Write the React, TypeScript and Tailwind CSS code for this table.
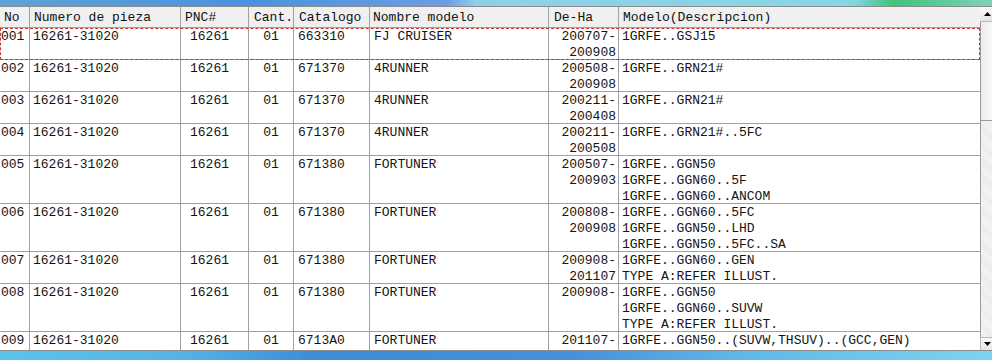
type Part = {
  no: string;
  catalogo: string;
  modelo: string;
  deHa: string[];
  desc: string[];
  lines: number;
};

const ROWS: Part[] = [
  { no: "001", catalogo: "663310", modelo: "FJ CRUISER", deHa: ["200707-", "200908"], desc: ["1GRFE..GSJ15"], lines: 2 },
  { no: "002", catalogo: "671370", modelo: "4RUNNER", deHa: ["200508-", "200908"], desc: ["1GRFE..GRN21#"], lines: 2 },
  { no: "003", catalogo: "671370", modelo: "4RUNNER", deHa: ["200211-", "200408"], desc: ["1GRFE..GRN21#"], lines: 2 },
  { no: "004", catalogo: "671370", modelo: "4RUNNER", deHa: ["200211-", "200508"], desc: ["1GRFE..GRN21#..5FC"], lines: 2 },
  {
    no: "005",
    catalogo: "671380",
    modelo: "FORTUNER",
    deHa: ["200507-", "200903"],
    desc: ["1GRFE..GGN50", "1GRFE..GGN60..5F", "1GRFE..GGN60..ANCOM"],
    lines: 3,
  },
  {
    no: "006",
    catalogo: "671380",
    modelo: "FORTUNER",
    deHa: ["200808-", "200908"],
    desc: ["1GRFE..GGN60..5FC", "1GRFE..GGN50..LHD", "1GRFE..GGN50..5FC..SA"],
    lines: 3,
  },
  {
    no: "007",
    catalogo: "671380",
    modelo: "FORTUNER",
    deHa: ["200908-", "201107"],
    desc: ["1GRFE..GGN60..GEN", "TYPE A:REFER ILLUST."],
    lines: 2,
  },
  {
    no: "008",
    catalogo: "671380",
    modelo: "FORTUNER",
    deHa: ["200908-"],
    desc: ["1GRFE..GGN50", "1GRFE..GGN60..SUVW", "TYPE A:REFER ILLUST."],
    lines: 3,
  },
  {
    no: "009",
    catalogo: "6713A0",
    modelo: "FORTUNER",
    deHa: ["201107-"],
    desc: ["1GRFE..GGN50..(SUVW,THSUV)..(GCC,GEN)"],
    lines: 2,
  },
];

const GRID = "grid grid-cols-[30px_151px_68px_45px_76px_179px_70px_1fr]";
const CELL = "border-r border-[#a0a0a0] whitespace-pre overflow-hidden pt-[1px]";

function Row({ row, focused }: { row: Part; focused: boolean }) {
  return (
    <div
      className={`${GRID} shrink-0 border-b border-[#a0a0a0] ${
        focused ? "outline-1 outline-dashed outline-[#c4352f] -outline-offset-1" : ""
      } ${row.lines === 3 ? "h-[48px]" : "h-[32px]"}`}
    >
      <div className={`${CELL} pl-[1px]`}>{row.no}</div>
      <div className={`${CELL} pl-[3px]`}>16261-31020</div>
      <div className={`${CELL} pl-[9px]`}>16261</div>
      <div className={`${CELL} text-center`}>01</div>
      <div className={`${CELL} pl-[4px]`}>{row.catalogo}</div>
      <div className={`${CELL} pl-[4px]`}>{row.modelo}</div>
      <div className={`${CELL} flex flex-col items-end pr-[2px]`}>
        {row.deHa.map((d, i) => (
          <span key={i}>{d}</span>
        ))}
      </div>
      <div className="flex flex-col pl-[3px] pt-[1px] whitespace-pre">
        {row.desc.map((d, i) => (
          <span key={i}>{d}</span>
        ))}
      </div>
    </div>
  );
}

function Scrollbar() {
  return (
    <div className="flex w-[12px] flex-col bg-[#f3f3f3]">
      <div className="flex h-[15px] items-center justify-center border-b border-[#b8b8b8] bg-gradient-to-b from-[#fafafa] to-[#e4e4e4] pl-[2px]">
        <svg width="7" height="4" viewBox="0 0 7 4">
          <path d="M0 4 L3.5 0 L7 4 Z" fill="#000" />
        </svg>
      </div>
      <div className="h-[99px] border-l border-b border-[#9a9a9a] bg-gradient-to-r from-[#ececec] to-[#f8f8f8]" />
      <div className="flex-1 border-l border-[#9a9a9a] bg-[repeating-linear-gradient(45deg,#f6f6f6_0px,#f6f6f6_1px,#e9e9e9_1px,#e9e9e9_2px)]" />
      <div className="flex h-[13px] items-center justify-center border-t border-l border-[#b8b8b8] bg-gradient-to-b from-[#fafafa] to-[#e4e4e4] pl-[2px]">
        <svg width="7" height="4" viewBox="0 0 7 4">
          <path d="M0 0 L3.5 4 L7 0 Z" fill="#000" />
        </svg>
      </div>
    </div>
  );
}

export default function App() {
  return (
    <div className="flex h-[360px] w-[992px] flex-col overflow-hidden bg-[#4a92dc] font-['Liberation_Mono','Courier_New',monospace] text-[13px] leading-[16px] text-[#141414]">
      <div className="h-[6px] shrink-0 bg-[linear-gradient(90deg,#5ea3d6_0%,#4b92de_25%,#6d9de2_45%,#8fd0e9_48%,#86d6e4_86%,#3fc47c_90%,#7fd2b8_100%)]" />
      <div className="flex h-[345px] shrink-0 border-t border-b border-[#8c8c8c] bg-white">
        <div className="flex w-[980px] flex-col overflow-hidden">
          <div className={`${GRID} h-[21px] shrink-0 items-center border-b border-[#a0a0a0] bg-[#f0f0f0] text-[#111]`}>
            <div className="pl-[4px] border-r border-[#a0a0a0] h-full leading-[21px]">No</div>
            <div className="pl-[4px] border-r border-[#a0a0a0] h-full leading-[21px]">Numero de pieza</div>
            <div className="pl-[4px] border-r border-[#a0a0a0] h-full leading-[21px]">PNC#</div>
            <div className="pl-[5px] border-r border-[#a0a0a0] h-full leading-[21px]">Cant.</div>
            <div className="pl-[5px] border-r border-[#a0a0a0] h-full leading-[21px]">Catalogo</div>
            <div className="pl-[3px] border-r border-[#a0a0a0] h-full leading-[21px]">Nombre modelo</div>
            <div className="pl-[5px] border-r border-[#a0a0a0] h-full leading-[21px]">De-Ha</div>
            <div className="pl-[4px] h-full leading-[21px]">Modelo(Descripcion)</div>
          </div>
          {ROWS.map((r, i) => (
            <Row key={r.no} row={r} focused={i === 0} />
          ))}
        </div>
        <Scrollbar />
      </div>
      <div className="flex-1 bg-[linear-gradient(90deg,#5cc3ea_0%,#55b4e6_18%,#3b8cd9_32%,#4690dc_58%,#5fb9e8_75%,#7cd4ee_100%)]" />
    </div>
  );
}
